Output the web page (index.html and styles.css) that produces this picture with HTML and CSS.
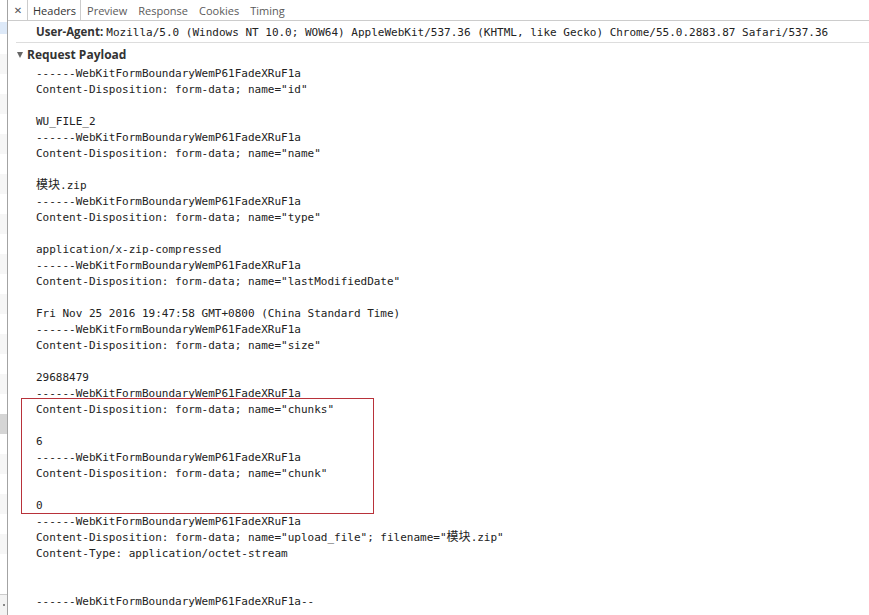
FILE: index.html
```html
<!DOCTYPE html>
<html lang="zh-CN">
<head>
    <meta charset="UTF-8">
    <title>Headers - Request Payload</title>
    <link rel="stylesheet" href="styles.css">
</head>
<body>
    <div class="devtools">
        <div class="request-list">
            <div class="row top"></div>
            <div class="row selected-light"></div>
            <div class="row"></div>
            <div class="row odd"></div>
            <div class="row"></div>
            <div class="row odd"></div>
            <div class="row"></div>
            <div class="row odd"></div>
            <div class="row"></div>
            <div class="row odd"></div>
            <div class="row"></div>
            <div class="row odd"></div>
            <div class="row"></div>
            <div class="row odd"></div>
            <div class="row"></div>
            <div class="row odd"></div>
            <div class="row"></div>
            <div class="row odd"></div>
            <div class="row"></div>
            <div class="row odd"></div>
            <div class="row"></div>
            <div class="row active"></div>
            <div class="row"></div>
            <div class="row odd"></div>
            <div class="row"></div>
            <div class="row odd"></div>
            <div class="row"></div>
            <div class="row odd"></div>
            <div class="status-bar"><span class="dot"></span></div>
        </div>

        <div class="detail">
            <div class="tabbar">
                <span class="close">&#x2715;</span>
                <span class="tab selected">Headers</span>
                <span class="tab">Preview</span>
                <span class="tab">Response</span>
                <span class="tab">Cookies</span>
                <span class="tab">Timing</span>
            </div>

            <div class="header-row">
                <span class="header-name">User-Agent:</span>
                <span class="header-value">Mozilla/5.0 (Windows NT 10.0; WOW64) AppleWebKit/537.36 (KHTML, like Gecko) Chrome/55.0.2883.87 Safari/537.36</span>
            </div>

            <div class="section">
                <div class="section-title"><span class="arrow"></span>Request Payload</div>
<pre class="payload">------WebKitFormBoundaryWemP61FadeXRuF1a
Content-Disposition: form-data; name="id"

WU_FILE_2
------WebKitFormBoundaryWemP61FadeXRuF1a
Content-Disposition: form-data; name="name"

<span class="cjk">模块</span>.zip
------WebKitFormBoundaryWemP61FadeXRuF1a
Content-Disposition: form-data; name="type"

application/x-zip-compressed
------WebKitFormBoundaryWemP61FadeXRuF1a
Content-Disposition: form-data; name="lastModifiedDate"

Fri Nov 25 2016 19:47:58 GMT+0800 (China Standard Time)
------WebKitFormBoundaryWemP61FadeXRuF1a
Content-Disposition: form-data; name="size"

29688479
------WebKitFormBoundaryWemP61FadeXRuF1a
Content-Disposition: form-data; name="chunks"

6
------WebKitFormBoundaryWemP61FadeXRuF1a
Content-Disposition: form-data; name="chunk"

0
------WebKitFormBoundaryWemP61FadeXRuF1a
Content-Disposition: form-data; name="upload_file"; filename="<span class="cjk">模块</span>.zip"
Content-Type: application/octet-stream


------WebKitFormBoundaryWemP61FadeXRuF1a--</pre>
            </div>
        </div>

        <div class="highlight-box"></div>
    </div>
</body>
</html>
```

FILE: styles.css
```css
html, body {
    margin: 0;
    padding: 0;
    background: #fff;
}
body {
    font-family: "Open Sans", "Noto Sans", Arial, sans-serif;
    font-size: 12px;
    color: #333;
    overflow: hidden;
}
.devtools {
    position: relative;
    display: flex;
    width: 869px;
    height: 615px;
    overflow: hidden;
}

/* left edge of the request list */
.request-list {
    width: 7px;
    flex: none;
    border-right: 1px solid #a3a3a3;
    display: flex;
    flex-direction: column;
}
.request-list .row {
    height: 20px;
    flex: none;
    background: #fff;
}
.request-list .row.top {
    height: 22px;
}
.request-list .row.selected-light {
    height: 12px;
    background: #dde9f8;
}
.request-list .row.odd {
    background: #f6f6f6;
}
.request-list .row.active {
    background: #d5d5d5;
}
.request-list .status-bar {
    margin-top: auto;
    height: 20px;
    border-top: 1px solid #ccc;
    background: #f3f3f3;
    display: flex;
    align-items: center;
    justify-content: center;
}
.status-bar .dot {
    width: 2px;
    height: 2px;
    background: #888;
}

/* headers panel */
.detail {
    flex: 1;
    min-width: 0;
}
.tabbar {
    height: 20px;
    display: flex;
    align-items: stretch;
    border-bottom: 1px solid #ccc;
    background: #fff;
}
.close {
    width: 20px;
    display: flex;
    align-items: center;
    justify-content: center;
    font-size: 10px;
    color: #555;
    font-family: "DejaVu Sans", sans-serif;
}
.tab {
    display: flex;
    align-items: center;
    padding: 0 4px 0 5px;
    color: #5a5a5a;
    font-size: 11px;
    border-left: 1px solid transparent;
    border-right: 1px solid transparent;
}
.tab.selected {
    color: #333;
    border-left-color: #ccc;
    border-right-color: #ccc;
    margin-left: -1px;
}

.header-row {
    height: 21px;
    line-height: 21px;
    margin-left: 8px;
    padding-left: 20px;
    border-bottom: 1px solid #ddd;
    white-space: nowrap;
}
.header-name {
    font-weight: bold;
    color: #333;
    font-size: 11.5px;
}
.header-value {
    font-family: "DejaVu Sans Mono", "Liberation Mono", monospace;
    font-size: 11px;
    color: #222;
}

.section {
    padding-top: 4px;
}
.section-title {
    height: 16px;
    line-height: 16px;
    display: flex;
    align-items: center;
    padding-left: 9px;
    font-weight: bold;
    color: #333;
}
.arrow {
    width: 0;
    height: 0;
    border-left: 3.5px solid transparent;
    border-right: 3.5px solid transparent;
    border-top: 6px solid #666;
    margin-right: 4px;
}
.payload {
    margin: 3px 0 0 28px;
    font-family: "DejaVu Sans Mono", "Liberation Mono", monospace;
    font-size: 11px;
    line-height: 16px;
    color: #222;
}
.cjk {
    font-family: "Noto Sans CJK SC", sans-serif;
    font-size: 12px;
    line-height: 1;
}

/* annotation drawn over the screenshot */
.highlight-box {
    position: absolute;
    left: 21px;
    top: 398px;
    width: 351px;
    height: 114px;
    border: 1px solid #b8323a;
    pointer-events: none;
}
```
